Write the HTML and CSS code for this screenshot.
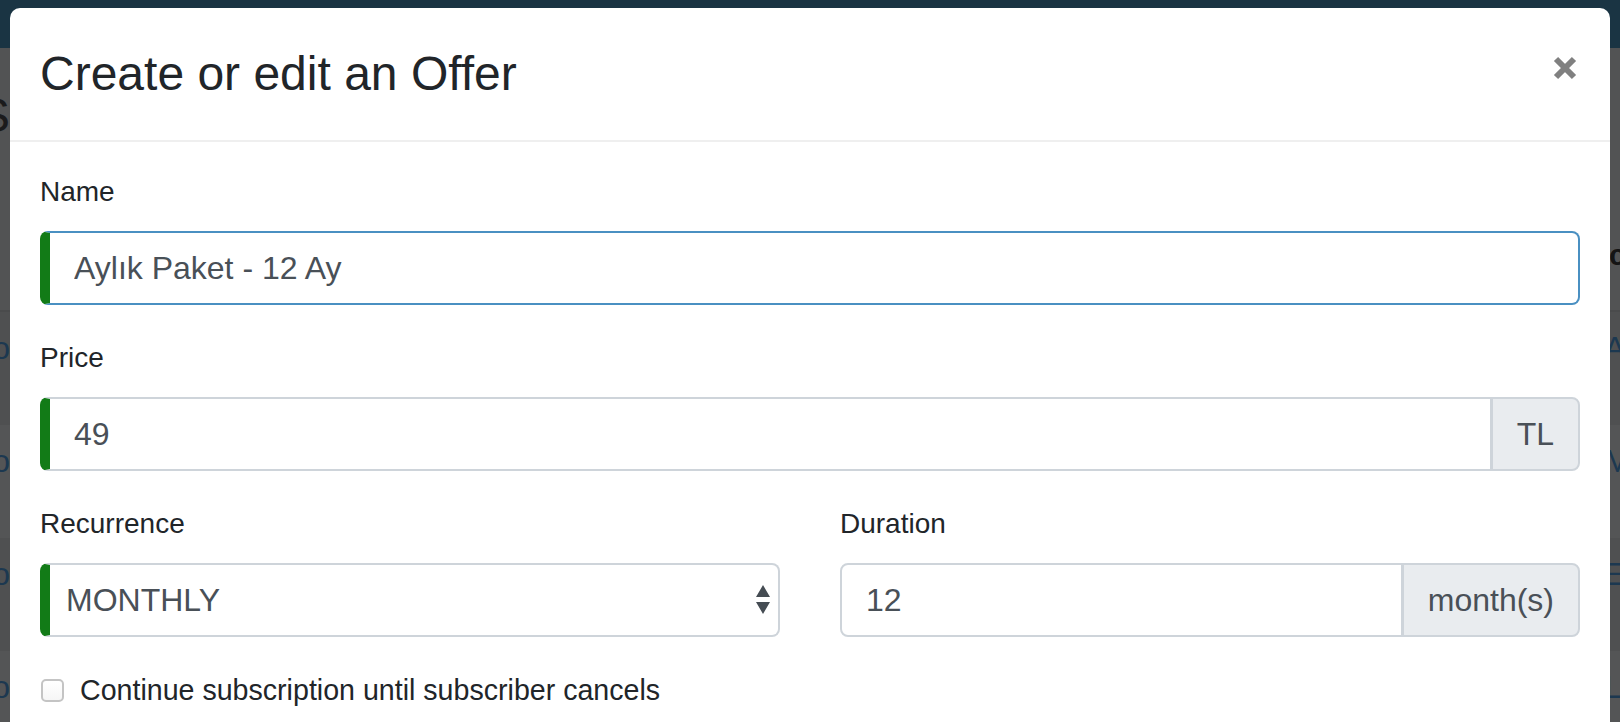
FILE: index.html
```html
<!DOCTYPE html>
<html lang="en">
<head>
<meta charset="utf-8">
<title>Create or edit an Offer</title>
<link rel="stylesheet" href="styles.css">
</head>
<body>
<div class="page">
  <header class="navbar"></header>
  <main class="content">
    <h1 class="page-title">Subscriptions</h1>
    <div class="table">
      <div class="tr th">
        <span class="cell-left"></span>
        <span class="cell-right head">count</span>
      </div>
      <div class="tr odd">
        <span class="cell-left">Demo</span>
        <span class="cell-right">Aylık</span>
      </div>
      <div class="tr even">
        <span class="cell-left">Demo</span>
        <span class="cell-right">Monthly</span>
      </div>
      <div class="tr odd">
        <span class="cell-left">Demo</span>
        <span class="cell-right">Edit</span>
      </div>
      <div class="tr even">
        <span class="cell-left">Demo</span>
        <span class="cell-right">List</span>
      </div>
    </div>
  </main>
</div>

<div class="modal">
  <div class="modal-header">
    <h4 class="modal-title">Create or edit an Offer</h4>
    <button class="close" type="button" aria-label="Close">
      <svg width="24" height="24" viewBox="0 0 24 24"><path d="M3 3 L21 21 M21 3 L3 21" stroke="#808080" stroke-width="6" fill="none"/></svg>
    </button>
  </div>
  <div class="modal-body">
    <div class="form-group">
      <label for="name">Name</label>
      <input id="name" class="form-control valid focus" type="text" value="Aylık Paket - 12 Ay">
    </div>
    <div class="form-group">
      <label for="price">Price</label>
      <div class="input-group">
        <input id="price" class="form-control valid" type="text" value="49">
        <span class="addon">TL</span>
      </div>
    </div>
    <div class="form-row">
      <div class="form-group">
        <label for="rec">Recurrence</label>
        <div class="select-wrap">
          <select id="rec" class="form-control valid select">
            <option>MONTHLY</option>
          </select>
          <svg class="select-arrows" width="14" height="29" viewBox="0 0 14 29"><path d="M0 12 L7 0 L14 12 Z M0 17 L14 17 L7 29 Z" fill="#454c53"/></svg>
        </div>
      </div>
      <div class="form-group">
        <label for="dur">Duration</label>
        <div class="input-group">
          <input id="dur" class="form-control" type="text" value="12">
          <span class="addon">month(s)</span>
        </div>
      </div>
    </div>
    <div class="form-check">
      <input id="cont" class="check" type="checkbox">
      <label for="cont" class="check-label">Continue subscription until subscriber cancels</label>
    </div>
  </div>
</div>
</body>
</html>
```
FILE: styles.css
```css
* { box-sizing: border-box; }

html, body {
  margin: 0;
  height: 100%;
}

body {
  font-family: "Liberation Sans", Arial, sans-serif;
  background: #525354;
  overflow: hidden;
  position: relative;
}

/* page behind the backdrop */
.navbar {
  height: 48px;
  background: #1a3443;
}

.page-title {
  margin: 39px 0 0 -22px;
  font-size: 48px;
  font-weight: 400;
  line-height: 57.6px;
  color: #1b1b1c;
}

.table {
  margin-top: 55px;
  display: flex;
  flex-direction: column;
}

.tr {
  display: flex;
  height: 113px;
  padding-top: 12px;
  font-size: 32px;
  line-height: 48px;
  color: #1c3850;
}

.tr.th {
  height: 112px;
  padding-top: 0;
  align-items: center;
  font-weight: 700;
  font-size: 30px;
  color: #141414;
  border-bottom: 2px solid #4a4b4c;
}

.tr.odd { background: #4f5051; }
.tr.even { background: #545556; }

.cell-left {
  width: 10px;
  flex: none;
  display: flex;
  justify-content: flex-end;
  white-space: nowrap;
}

.cell-right {
  margin-left: auto;
  width: 16px;
  flex: none;
  white-space: nowrap;
}

.cell-right.head {
  width: 11px;
}

/* modal */
.modal {
  position: absolute;
  left: 10px;
  top: 8px;
  width: 1600px;
  height: 760px;
  background: #ffffff;
  border-radius: 10px;
}

.modal-header {
  display: flex;
  justify-content: space-between;
  align-items: flex-start;
  height: 134px;
  padding: 37px 30px;
  border-bottom: 2px solid #efefef;
}

.modal-title {
  margin: 0;
  font-size: 48px;
  font-weight: 400;
  line-height: 57.6px;
  color: #212529;
}

.close {
  margin: 11px 3px 0 0;
  padding: 0;
  border: 0;
  background: transparent;
  width: 24px;
  height: 24px;
  display: block;
}

.close svg { display: block; }

.modal-body {
  padding: 29px 30px;
}

.form-group {
  margin-bottom: 32px;
}

.form-group label {
  display: block;
  font-size: 28px;
  line-height: 42px;
  margin-bottom: 18px;
  color: #212529;
}

.form-control {
  display: block;
  width: 100%;
  height: 74px;
  margin: 0;
  padding: 0 24px;
  font-family: inherit;
  font-size: 32px;
  color: #495057;
  background: #ffffff;
  border: 2px solid #ced4da;
  border-radius: 8px;
  outline: none;
}

.form-control.focus {
  border-color: #4a90c2;
}

.form-control.valid {
  border-left: 10px solid #127b17;
}

.input-group {
  display: flex;
}

.input-group .form-control {
  flex: 1;
  min-width: 0;
  border-top-right-radius: 0;
  border-bottom-right-radius: 0;
}

.addon {
  display: flex;
  align-items: center;
  padding: 0 24px;
  font-size: 32px;
  color: #495057;
  background: #e9ecef;
  border: 2px solid #ced4da;
  border-left: 1px solid #ced4da;
  border-radius: 0 8px 8px 0;
  white-space: nowrap;
}

.form-row {
  display: grid;
  grid-template-columns: 1fr 1fr;
  column-gap: 60px;
}

.select-wrap {
  position: relative;
}

.select {
  appearance: none;
  -webkit-appearance: none;
  padding-left: 16px;
  padding-right: 40px;
}

.select-arrows {
  position: absolute;
  right: 10px;
  top: 22px;
  pointer-events: none;
}

.form-check {
  display: flex;
  align-items: center;
  gap: 16px;
  height: 42px;
}

.check {
  appearance: none;
  -webkit-appearance: none;
  width: 23px;
  height: 23px;
  margin: 0 0 0 1px;
  border: 2px solid #c4c4c4;
  border-radius: 5px;
  background: linear-gradient(#ffffff, #f6f6f6);
}

.check-label {
  font-size: 28.6px;
  line-height: 42px;
  color: #212529;
}
```
